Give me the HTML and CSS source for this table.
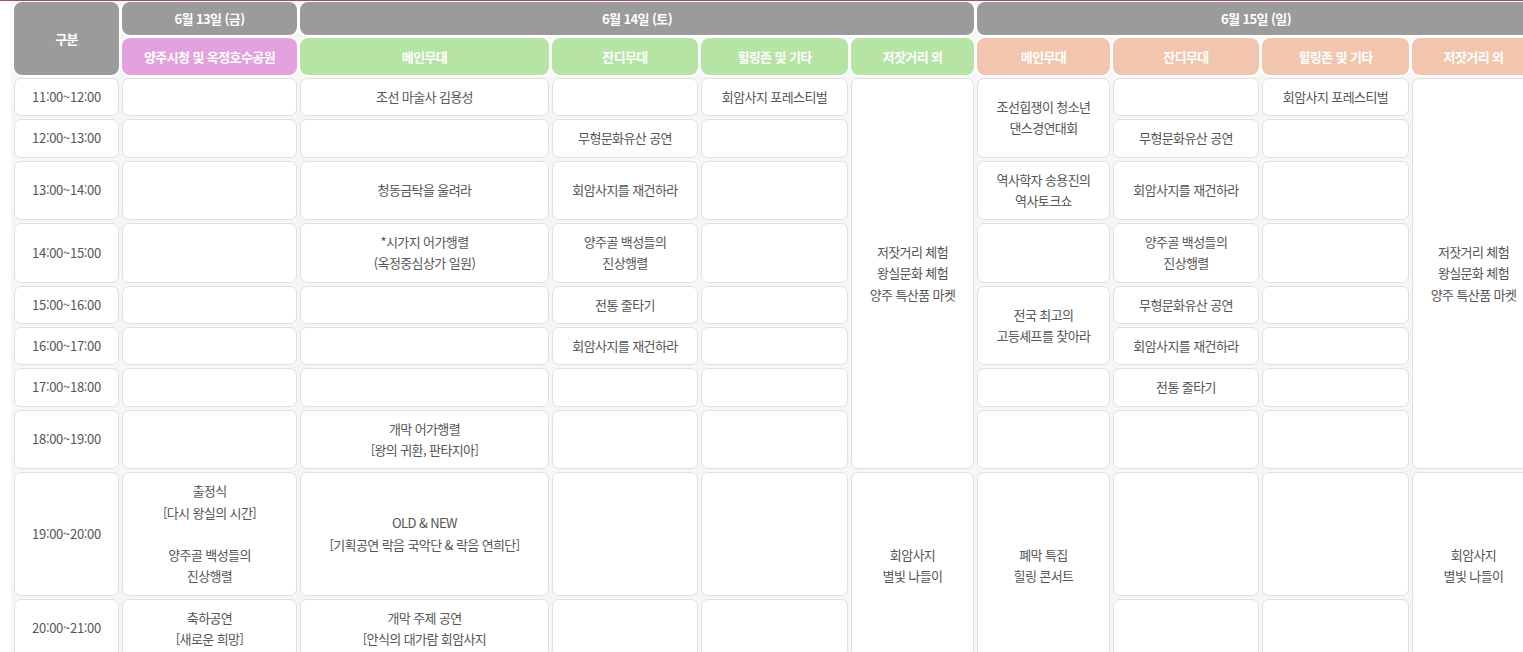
FILE: index.html
```html
<!DOCTYPE html>
<html lang="ko">
<head>
<meta charset="utf-8">
<title>행사 일정표</title>
<link rel="stylesheet" href="styles.css">
</head>
<body>
<div class="topline"></div>
<div class="page">
<table class="schedule">
  <colgroup>
    <col class="c-time">
    <col class="c-fri">
    <col class="c-main">
    <col class="c-grass">
    <col class="c-heal">
    <col class="c-street">
    <col class="c-main2">
    <col class="c-grass">
    <col class="c-heal">
    <col class="c-street">
  </colgroup>
  <thead>
    <tr class="hr-day">
      <th class="h-day" rowspan="2">구분</th>
      <th class="h-day">6월 13일 (금)</th>
      <th class="h-day" colspan="4">6월 14일 (토)</th>
      <th class="h-day" colspan="4">6월 15일 (일)</th>
    </tr>
    <tr class="hr-stage">
      <th class="h-pink">양주시청 및 옥정호수공원</th>
      <th class="h-green">메인무대</th>
      <th class="h-green">잔디무대</th>
      <th class="h-green">힐링존 및 기타</th>
      <th class="h-green">저잣거리 외</th>
      <th class="h-peach">메인무대</th>
      <th class="h-peach">잔디무대</th>
      <th class="h-peach">힐링존 및 기타</th>
      <th class="h-peach">저잣거리 외</th>
    </tr>
  </thead>
  <tbody>
    <tr>
      <td class="time">11:00~12:00</td>
      <td></td>
      <td>조선 마술사 김용성</td>
      <td></td>
      <td>회암사지 포레스티벌</td>
      <td rowspan="8">저잣거리 체험<br>왕실문화 체험<br>양주 특산품 마켓</td>
      <td rowspan="2">조선힙쟁이 청소년<br>댄스경연대회</td>
      <td></td>
      <td>회암사지 포레스티벌</td>
      <td rowspan="8">저잣거리 체험<br>왕실문화 체험<br>양주 특산품 마켓</td>
    </tr>
    <tr>
      <td class="time">12:00~13:00</td>
      <td></td>
      <td></td>
      <td>무형문화유산 공연</td>
      <td></td>
      <td>무형문화유산 공연</td>
      <td></td>
    </tr>
    <tr>
      <td class="time">13:00~14:00</td>
      <td></td>
      <td>청동금탁을 울려라</td>
      <td>회암사지를 재건하라</td>
      <td></td>
      <td>역사학자 송용진의<br>역사토크쇼</td>
      <td>회암사지를 재건하라</td>
      <td></td>
    </tr>
    <tr>
      <td class="time">14:00~15:00</td>
      <td></td>
      <td>*시가지 어가행렬<br>(옥정중심상가 일원)</td>
      <td>양주골 백성들의<br>진상행렬</td>
      <td></td>
      <td></td>
      <td>양주골 백성들의<br>진상행렬</td>
      <td></td>
    </tr>
    <tr>
      <td class="time">15:00~16:00</td>
      <td></td>
      <td></td>
      <td>전통 줄타기</td>
      <td></td>
      <td rowspan="2">전국 최고의<br>고등셰프를 찾아라</td>
      <td>무형문화유산 공연</td>
      <td></td>
    </tr>
    <tr>
      <td class="time">16:00~17:00</td>
      <td></td>
      <td></td>
      <td>회암사지를 재건하라</td>
      <td></td>
      <td>회암사지를 재건하라</td>
      <td></td>
    </tr>
    <tr>
      <td class="time">17:00~18:00</td>
      <td></td>
      <td></td>
      <td></td>
      <td></td>
      <td></td>
      <td>전통 줄타기</td>
      <td></td>
    </tr>
    <tr>
      <td class="time">18:00~19:00</td>
      <td></td>
      <td>개막 어가행렬<br>[왕의 귀환, 판타지아]</td>
      <td></td>
      <td></td>
      <td></td>
      <td></td>
      <td></td>
    </tr>
    <tr>
      <td class="time">19:00~20:00</td>
      <td>출정식<br>[다시 왕실의 시간]<br><br>양주골 백성들의<br>진상행렬</td>
      <td>OLD &amp; NEW<br>[기획공연 락음 국악단 &amp; 락음 연희단]</td>
      <td></td>
      <td></td>
      <td rowspan="2">회암사지<br>별빛 나들이</td>
      <td rowspan="2">폐막 특집<br>힐링 콘서트</td>
      <td></td>
      <td></td>
      <td rowspan="2">회암사지<br>별빛 나들이</td>
    </tr>
    <tr>
      <td class="time">20:00~21:00</td>
      <td>축하공연<br>[새로운 희망]</td>
      <td>개막 주제 공연<br>[안식의 대가람 회암사지</td>
      <td></td>
      <td></td>
      <td></td>
      <td></td>
    </tr>
  </tbody>
</table>
</div>
</body>
</html>
```

FILE: styles.css
```css
html, body {
  margin: 0;
  padding: 0;
  background: #ffffff;
}

body {
  overflow: hidden;
  font-family: "Noto Sans CJK KR", "Noto Sans", "Liberation Sans", sans-serif;
}

.topline {
  position: absolute;
  top: 0;
  left: 0;
  right: 0;
  height: 1px;
  background: #a8477f;
  z-index: 5;
}

.page {
  overflow: hidden;
}

.schedule {
  border-collapse: separate;
  border-spacing: 3px;
  table-layout: fixed;
  width: 1527px;
  margin: -1px 0 0 11px;
  background: #f6f6f6;
}

.c-time { width: 105px; }
.c-fri { width: 175px; }
.c-main { width: 249px; }
.c-grass { width: 146px; }
.c-heal { width: 147px; }
.c-street { width: 123px; }
.c-main2 { width: 133px; }

.schedule th {
  color: #ffffff;
  font-weight: 700;
  font-size: 13px;
  letter-spacing: -0.6px;
  text-align: center;
  vertical-align: middle;
  border-radius: 8px;
  box-shadow: 0 0 0 2px #ffffff;
  padding: 0 4px;
  white-space: nowrap;
}

.hr-day th {
  height: 33px;
  line-height: 21px;
}

.hr-stage th {
  height: 37px;
  line-height: 21px;
}

.h-day { background: #9b9b9b; }
.h-pink { background: #e3a2dd; }
.h-green { background: #b5e4a4; }
.h-peach { background: #f2c6ae; }

.schedule td {
  background: #ffffff;
  border: 1px solid #e0e0e0;
  border-radius: 7px;
  padding: 7px 4px 8px;
  text-align: center;
  vertical-align: middle;
  font-size: 13px;
  line-height: 21.3px;
  letter-spacing: -0.6px;
  color: #555555;
}

.schedule td.time {
  letter-spacing: -0.3px;
}
```
